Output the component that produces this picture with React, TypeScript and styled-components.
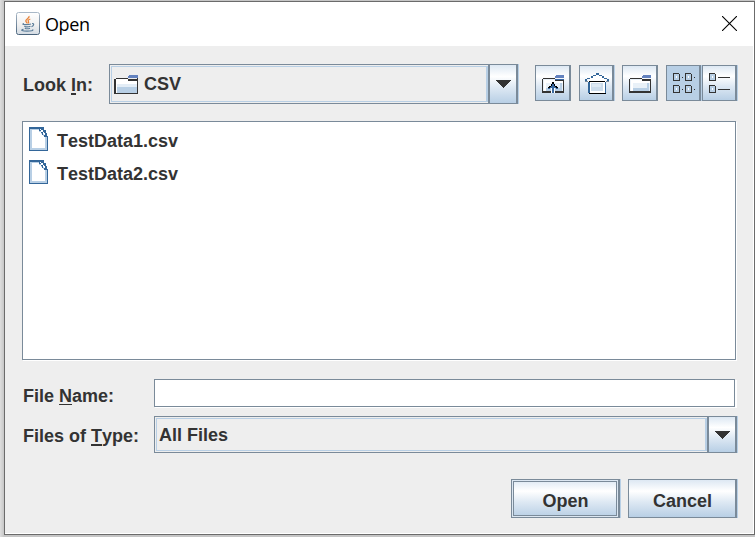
import React from "react";
import styled, { createGlobalStyle, css } from "styled-components";

const steel = "#7a8a99";
const sky = "#b8cfe5";
const ink = "#333333";
const metal = "linear-gradient(#dde8f3 0%, #ffffff 30%, #dde8f3 60%, #b8cfe5 100%)";

const GlobalStyle = createGlobalStyle`
  * { box-sizing: border-box; }
  body { margin: 0; overflow: hidden; background: #cfcfcf; }
  svg { display: block; flex: none; }
`;

const Desktop = styled.div`
  width: 755px;
  height: 537px;
  padding: 1px 0 2px 4px;
  background: linear-gradient(90deg, #dedede, #c6c6c6 4px);
`;

const Dialog = styled.div`
  width: 751px;
  height: 534px;
  border: 1px solid #6b6b6b;
  background: #fff;
  display: flex;
  flex-direction: column;
  font: bold 18px/20px "Liberation Sans", Arial, sans-serif;
  font-kerning: none;
  color: ${ink};
`;

const TitleBar = styled.header`
  height: 44px;
  flex: none;
  display: flex;
  align-items: center;
  padding: 0 17px 0 11px;
`;

const Title = styled.h1`
  flex: 1;
  margin: 0 0 0 5px;
  font: 400 18px/24px "Open Sans", "Noto Sans", sans-serif;
  letter-spacing: -0.4px;
  color: #000;
`;

const CloseButton = styled.button`
  margin-bottom: 2px;
  border: 0;
  padding: 0;
  background: none;
`;

const Content = styled.main`
  flex: 1;
  margin: 0 1px 1px 0;
  padding: 18px 16px 14px 17px;
  background: #eeeeee;
  display: flex;
  flex-direction: column;
`;

const Row = styled.div<{ $height: number; $gapAbove?: number }>`
  display: flex;
  height: ${(p) => p.$height}px;
  margin-top: ${(p) => p.$gapAbove ?? 0}px;
`;

const Label = styled.label<{ $width: number; $top: number }>`
  width: ${(p) => p.$width}px;
  padding: ${(p) => p.$top}px 0 0 1px;
  flex: none;
  white-space: nowrap;
`;

const Mnemonic = styled.span<{ $thickness?: number }>`
  text-decoration: underline;
  text-decoration-thickness: ${(p) => p.$thickness ?? 2}px;
  text-underline-offset: 2px;
  text-decoration-skip-ink: none;
`;

const Combo = styled.div<{ $width: number }>`
  width: ${(p) => p.$width}px;
  height: 100%;
  flex: none;
  display: flex;
  border: 1px solid ${steel};
  border-right-width: 2px;
  box-shadow: 1px 0 ${sky};
`;

const ComboValue = styled.div<{ $pad: number }>`
  flex: 1;
  display: flex;
  align-items: center;
  gap: 6px;
  margin: 1px 0 1px 1px;
  padding-left: ${(p) => p.$pad}px;
  border: 1px solid ${sky};
  border-right-width: 2px;
`;

const metalFace = css`
  background: ${metal};
`;

const ComboArrow = styled.div`
  width: 28px;
  border-left: 2px solid ${steel};
  display: flex;
  align-items: center;
  justify-content: center;
  ${metalFace}
`;

const Tools = styled.div`
  display: flex;
  margin: 1px 0 0 17px;
  gap: 8px;
`;

const ToolButton = styled.button<{ $wide?: boolean; $pressed?: boolean }>`
  width: ${(p) => (p.$wide ? 36 : 35)}px;
  height: 36px;
  flex: none;
  display: flex;
  align-items: flex-start;
  justify-content: flex-start;
  padding: 0;
  border: 1px solid ${steel};
  border-right-width: 2px;
  ${(p) => !p.$wide && css`box-shadow: 1px 0 ${sky};`}
  ${metalFace}
  ${(p) => p.$pressed && css`background: ${sky};`}
`;

const ToggleGroup = styled.div`
  display: flex;
  gap: 1px;
`;

const FileList = styled.div`
  width: 714px;
  height: 239px;
  margin-top: 17px;
  padding: 3px 0 0 6px;
  border: 1px solid ${steel};
  box-shadow: 1px 1px #fff;
  background: #fff;
`;

const FileItem = styled.div`
  height: 33px;
  display: flex;
  align-items: flex-start;
  gap: 9px;
  padding-top: 2px;
`;

const FileName = styled.span`
  padding-top: 4px;
`;

const NameField = styled.input`
  width: 581px;
  height: 28px;
  flex: none;
  padding: 0 4px;
  border: 1px solid ${steel};
  border-radius: 0;
  box-shadow: 1px 1px #fff, 2px 1px #fff;
  outline: none;
  background: #fff;
  font: inherit;
`;

const Actions = styled.footer`
  display: flex;
  justify-content: flex-end;
  gap: 8px;
  margin-top: 26px;
`;

const ActionButton = styled.button<{ $primary?: boolean }>`
  width: 109px;
  height: 39px;
  padding: 4px 0 0 1px;
  border: 1px solid ${steel};
  border-right-width: 2px;
  box-shadow: 1px 0 ${sky}${(p) => (p.$primary ? `, inset 0 0 0 1px #dce7f2, inset 0 0 0 2px ${steel}` : "")};
  color: ${ink};
  font: inherit;
  font-kerning: none;
  ${metalFace}
`;

const JavaIcon = () => (
  <svg width="24" height="24" viewBox="0 0 24 24" fill="none">
    <defs>
      <linearGradient id="tile" x2="0" y2="1">
        <stop stopColor="#ffffff" />
        <stop offset=".55" stopColor="#f1f1f1" />
        <stop offset="1" stopColor="#d3dbe3" />
      </linearGradient>
      <linearGradient id="rim" x2="0" y2="1">
        <stop stopColor="#a9b8c7" />
        <stop offset="1" stopColor="#49637c" />
      </linearGradient>
    </defs>
    <rect x=".5" y=".5" width="23" height="22" rx="2" fill="url(#tile)" stroke="url(#rim)" />
    <path d="M13 4c1 2.2-3.4 3-3.2 5 .1 1 1.4 1.5 1.4 2.5M14.3 7c-2 .8-2.8 1.5-1.8 2.8.5.7 0 1.2-.4 1.6" stroke="#e8833a" strokeWidth="1.3" />
    <path d="M8 11.6c-2 .6-1 1.1 1 1.1 2.4 0 4.5-.1 6-.7M8.3 14.2c1.5.8 4.7.7 6.2 0M8.8 16.2c1.5.7 3.7.6 5.2 0M16 11.5c2.500-.3 2 2.300-.5 3.200M7.500 17.300c-3.500.7-1.500 1.900 3.500 1.900 4 0 7-.7 5.500-1.700" stroke="#5b7d9a" strokeWidth="1.2" />
  </svg>
);

const CloseIcon = () => (
  <svg width="15" height="15" viewBox="0 0 15 15">
    <path d="M0 0l15 15M15 0L0 15" stroke="#000" strokeWidth="1.1" />
  </svg>
);

const ArrowIcon = () => (
  <svg width="15" height="8" viewBox="0 0 15 8" shapeRendering="crispEdges">
    <path d="M0 0h15v1h-1v1h-1v1h-1v1h-1v1h-1v1h-1v1H8v1H7V7H6V6H5V5H4V4H3V3H2V2H1V1H0z" fill={ink} />
  </svg>
);

const FolderIcon = () => (
  <svg width="24" height="19" viewBox="0 0 24 19" shapeRendering="crispEdges">
    <path d="M2 4h12v2h9v12H2z" fill="#fff" />
    <path d="M3 9h20v3H3z" fill="#e3edf6" />
    <path d="M3 12h20v6H3z" fill={sky} />
    <path d="M2 6h1v12H2z" fill="#fff" />
    <path d="M2 3h12v1H2zM0 4h2v14H0zM0 18h24v1H0zM23 2h1v17h-1zM14 4h10v2H14z" fill={ink} />
    <path d="M15 0h9v3H14V1h1z" fill="#6382bf" />
  </svg>
);

const ToolFolderBase = () => (
  <>
    <path d="M7 13h21v13H7z" fill="#e9f1f8" />
    <path d="M8 14h12v1h7v2H8zM8 17h2v8H8z" fill="#fff" />
    <path d="M10 22h15v3H10zM24 17h2v8h-2z" fill={sky} />
    <path d="M7 12h12v1H7zM6 13h1v14H6zM7 25h21v2H7zM27 13h1v13h-1zM19 13h9v2h-9z" fill={ink} />
    <path d="M20 9h8v3h-9v-2h1z" fill="#6382bf" />
  </>
);

const UpFolderIcon = () => (
  <svg width="32" height="34" viewBox="0 0 32 34" shapeRendering="crispEdges">
    <ToolFolderBase />
    <path d="M19 13h9v1h-9z" fill="#3465a4" />
    <path d="M15 18h4v9h-4z" fill="#fff" />
    <path d="M16 18h2v9h-2zM14 20h2v2h-2zM18 20h2v2h-2zM12 22h2v1h-2zM20 22h2v1h-2z" fill="#39699f" />
    <path d="M16 16h2v2h-2zM15 18h1v2h-1zM18 18h1v2h-1zM13 20h2v1h-2zM19 20h2v1h-2zM12 21h2v1h-2zM20 21h2v1h-2z" fill="#000" />
  </svg>
);

const HomeIcon = () => (
  <svg width="32" height="34" viewBox="0 0 32 34" shapeRendering="crispEdges">
    <path d="M15 8h4v2h3v2h4v3h3v1H5v-1h3v-3h4v-2h3z" fill="#fff" />
    <path d="M8 16h18v11H8z" fill="#fff" />
    <path d="M11 17h12v8H11z" fill="#ccdceb" />
    <path d="M12 18h9v3h-9z" fill="#dee9f3" />
    <path d="M16 7h3v2h-3zM13 9h3v1h-3zM19 9h3v1h-3zM11 10h2v2h-2zM22 10h2v2h-2zM7 12h3v1H7zM24 12h3v1h-3zM5 13h2v2H5zM27 13h2v2h-2zM8 16h2v11H8zM25 16h1v11h-1z" fill="#336699" />
    <path d="M5 15h3v1H5zM26 15h3v1h-3z" fill={steel} />
    <path d="M9 15h16v1H9zM9 27h17v1H9z" fill="#000" />
  </svg>
);

const NewFolderIcon = () => (
  <svg width="32" height="34" viewBox="0 0 32 34" shapeRendering="crispEdges">
    <ToolFolderBase />
  </svg>
);

const Cell = ({ x, y }: { x: number; y: number }) => (
  <g transform={`translate(${x} ${y})`}>
    <path d="M1 1h5v6H1z" fill={sky} />
    <path d="M0 0h6v1H1v6h5V1h1v7H0z" fill={ink} />
    <path d="M3 3h1v2H3z" fill="#fff" />
  </g>
);

const ListViewIcon = () => (
  <svg width="32" height="34" viewBox="0 0 32 34" shapeRendering="crispEdges">
    {[7, 19].map((y) => [6, 18].map((x) => (
      <React.Fragment key={`${x}-${y}`}>
        <Cell x={x} y={y} />
        <path d={`M${x + 9} ${y + 4}h1v1h-1z`} fill={ink} />
      </React.Fragment>
    )))}
  </svg>
);

const DetailsViewIcon = () => (
  <svg width="32" height="34" viewBox="0 0 32 34" shapeRendering="crispEdges">
    {[7, 19].map((y) => (
      <React.Fragment key={y}>
        <Cell x={6} y={y} />
        <path d={`M15 ${y + 4}h12v1H15z`} fill={ink} />
      </React.Fragment>
    ))}
  </svg>
);

const FileIcon = () => (
  <svg width="19" height="24" viewBox="0 0 19 24" shapeRendering="crispEdges">
    <path d="M0 0h15v3h2v3h1v3h1v15H0z" fill="#336699" />
    <path d="M1 2h9v1h2v2h2v2h2v3h2v13H1z" fill={sky} />
    <path d="M3 3h7v2h2v2h2v2h2v12H3z" fill="#fff" />
    <path d="M11 2h1v1h-1zM12 3h2v2h-2zM14 5h1v2h-1zM15 6h1v2h-1z" fill="#fff" />
    <path d="M10 3h2v1h-2zM12 5h2v1h-2zM13 6h1v2h-1zM15 8h1v2h-1z" fill="#336699" />
  </svg>
);

const files = ["TestData1.csv", "TestData2.csv"];

export default function App() {
  return (
    <>
      <GlobalStyle />
      <Desktop>
        <Dialog>
          <TitleBar>
            <JavaIcon />
            <Title>Open</Title>
            <CloseButton aria-label="Close"><CloseIcon /></CloseButton>
          </TitleBar>
          <Content>
            <Row $height={40}>
              <Label $width={87} $top={11}>Look <Mnemonic>I</Mnemonic>n:</Label>
              <Combo $width={409}>
                <ComboValue $pad={2}><FolderIcon /><span>CSV</span></ComboValue>
                <ComboArrow><ArrowIcon /></ComboArrow>
              </Combo>
              <Tools>
                <ToolButton $wide aria-label="Up one level"><UpFolderIcon /></ToolButton>
                <ToolButton aria-label="Home"><HomeIcon /></ToolButton>
                <ToolButton $wide aria-label="New folder"><NewFolderIcon /></ToolButton>
                <ToggleGroup>
                  <ToolButton aria-label="List" $pressed><ListViewIcon /></ToolButton>
                  <ToolButton aria-label="Details"><DetailsViewIcon /></ToolButton>
                </ToggleGroup>
              </Tools>
            </Row>
            <FileList>
              {files.map((name) => (
                <FileItem key={name}><FileIcon /><FileName>{name}</FileName></FileItem>
              ))}
            </FileList>
            <Row $height={28} $gapAbove={19}>
              <Label $width={132} $top={7}>File <Mnemonic $thickness={1}>N</Mnemonic>ame:</Label>
              <NameField />
            </Row>
            <Row $height={37} $gapAbove={9}>
              <Label $width={132} $top={10}>Files of <Mnemonic>T</Mnemonic>ype:</Label>
              <Combo $width={583}>
                <ComboValue $pad={2}><span>All Files</span></ComboValue>
                <ComboArrow><ArrowIcon /></ComboArrow>
              </Combo>
            </Row>
            <Actions>
              <ActionButton $primary>Open</ActionButton>
              <ActionButton>Cancel</ActionButton>
            </Actions>
          </Content>
        </Dialog>
      </Desktop>
    </>
  );
}
